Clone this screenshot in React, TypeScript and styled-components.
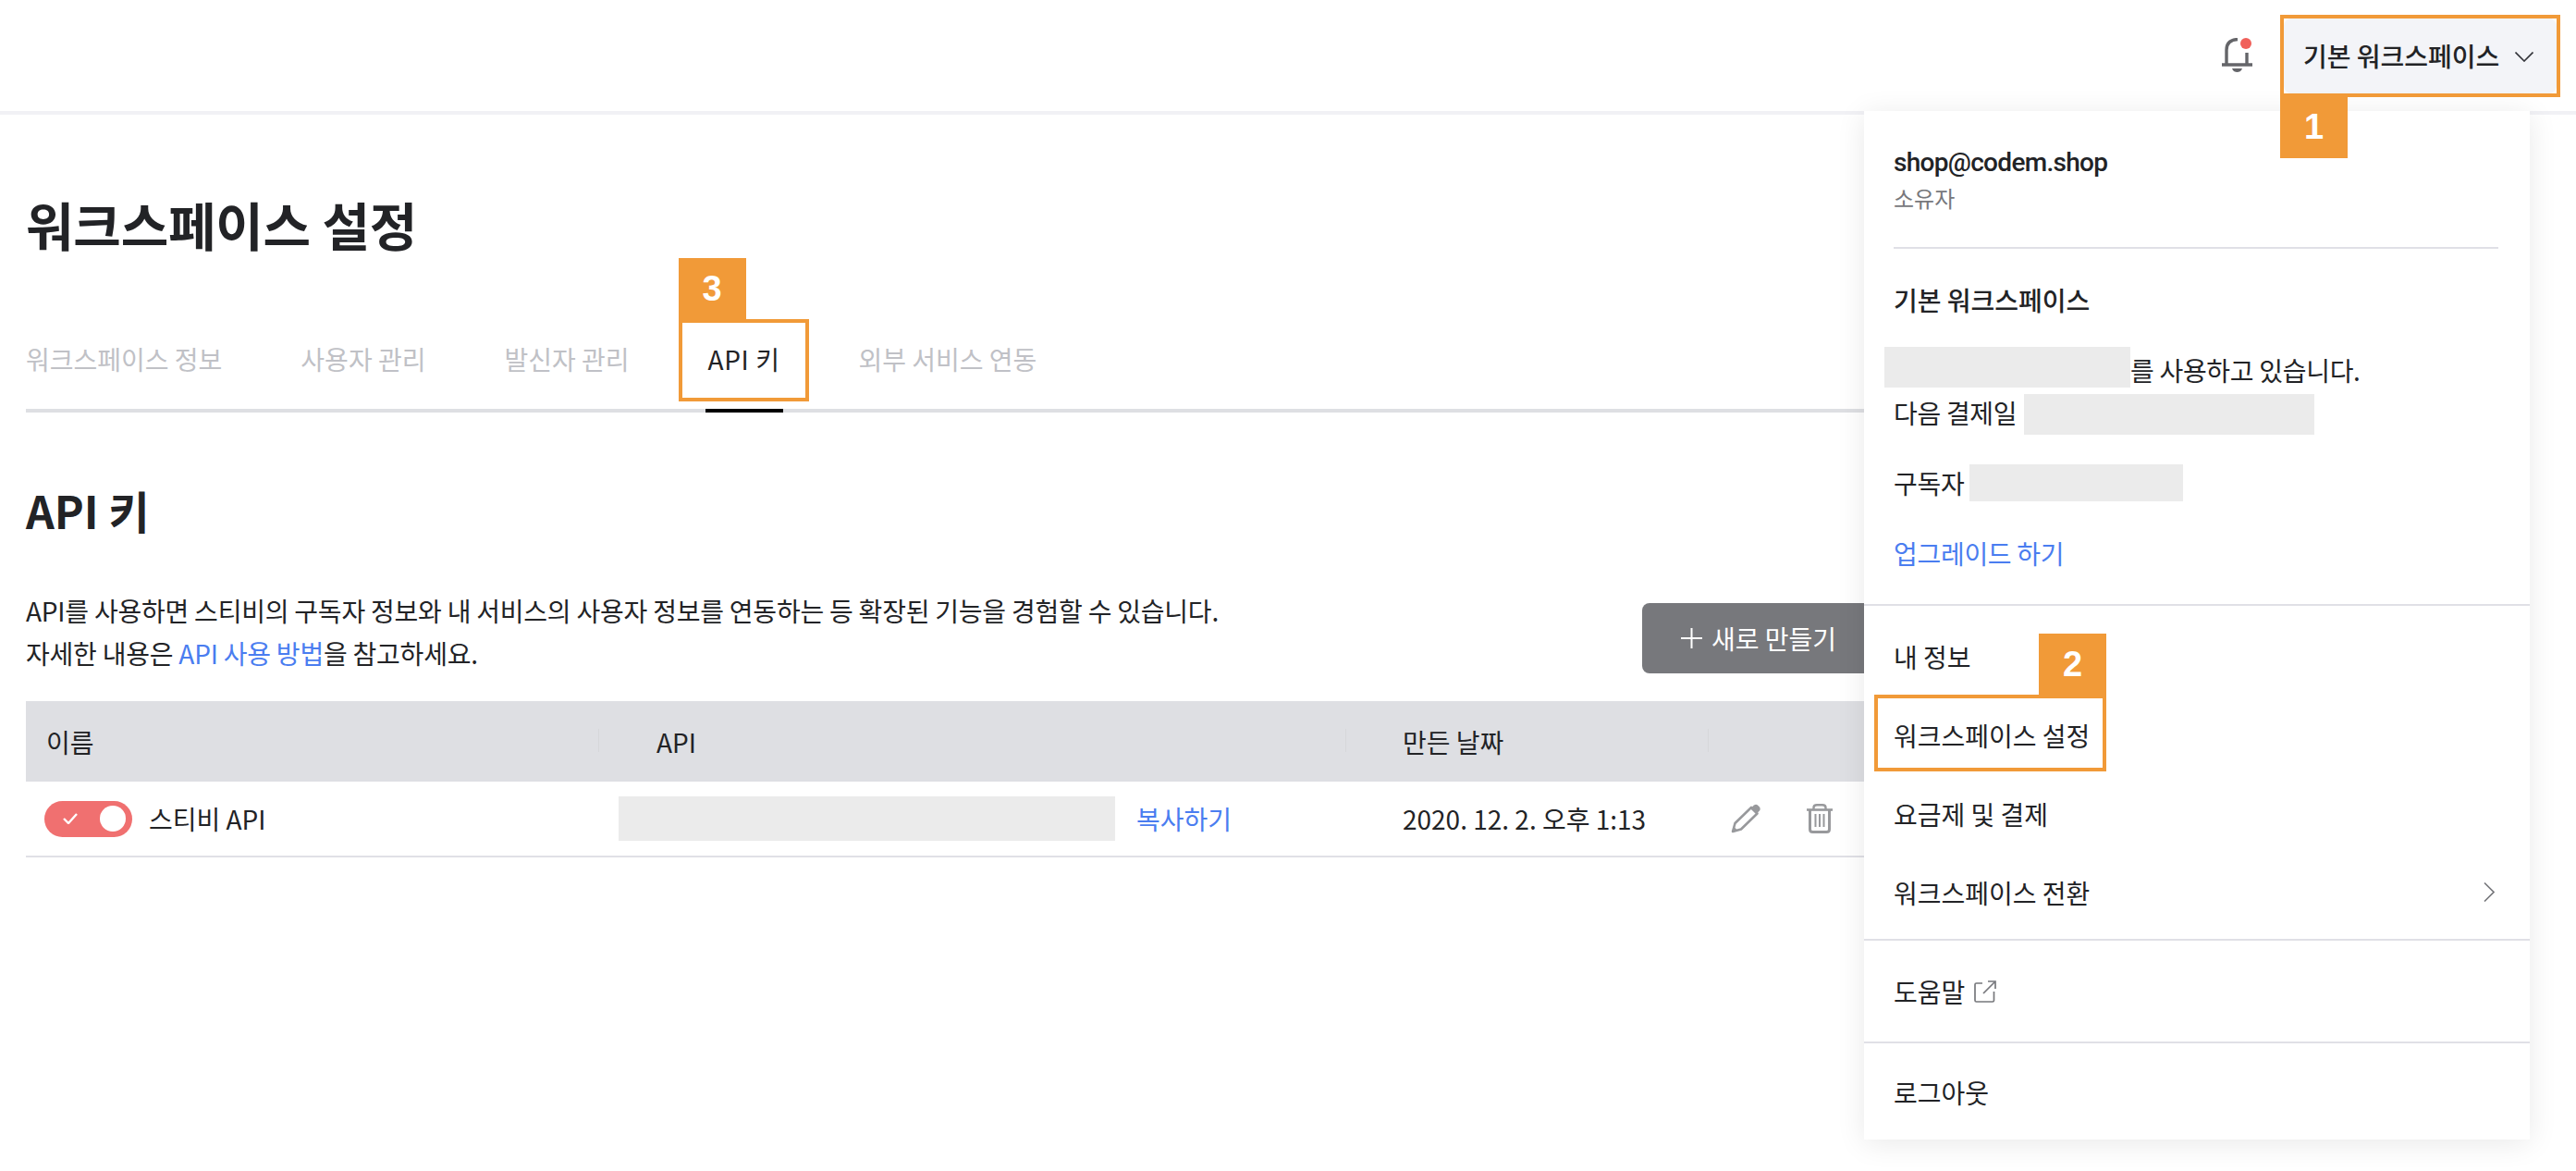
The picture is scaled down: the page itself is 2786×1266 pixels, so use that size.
import React from "react";
import styled, { createGlobalStyle } from "styled-components";

const GlobalStyle = createGlobalStyle`
  html, body {
    margin: 0;
    padding: 0;
    background: #fff;
  }
  body {
    font-family: "Noto Sans CJK KR", "Noto Sans", sans-serif;
    color: #222326;
  }
`;

const ORANGE = "#f19a38";
const BLUE = "#4a7df0";

export default function App() {
  return (
    <Page>
      <GlobalStyle />
      <Header>
        <BellIcon />
        <WorkspaceButton>
          기본 워크스페이스
          <ChevronDown />
          <Callout $top={-4} $left={-4} $width={303} $height={89}>
            <Badge $place="below">1</Badge>
          </Callout>
        </WorkspaceButton>
      </Header>

      <Main>
        <Title>워크스페이스 설정</Title>
        <Tabs>
          <Tab>워크스페이스 정보</Tab>
          <Tab>사용자 관리</Tab>
          <Tab>발신자 관리</Tab>
          <Tab $active>
            API 키
            <Callout $top={-23} $left={-32} $width={141} $height={89}>
              <Badge $place="above">3</Badge>
            </Callout>
          </Tab>
          <Tab>외부 서비스 연동</Tab>
        </Tabs>

        <SectionTitle>API 키</SectionTitle>
        <IntroRow>
          <Intro>
            API를 사용하면 스티비의 구독자 정보와 내 서비스의 사용자 정보를 연동하는 등 확장된 기능을 경험할 수 있습니다.
            <br />
            자세한 내용은 <Link>API 사용 방법</Link>을 참고하세요.
          </Intro>
          <NewButton>
            <PlusIcon />
            새로 만들기
          </NewButton>
        </IntroRow>

        <Table>
          <HeadCell $pad={22}>이름</HeadCell>
          <HeadCell $pad={63} $divider>API</HeadCell>
          <HeadCell $pad={62} $divider>만든 날짜</HeadCell>
          <HeadCell $pad={0} $divider />
          <BodyCell $pad={20}>
            <Toggle>
              <CheckIcon />
              <Knob />
            </Toggle>
            <ApiName>스티비 API</ApiName>
          </BodyCell>
          <BodyCell $pad={22}>
            <Redact $width={537} $height={48} />
            <CopyLink>복사하기</CopyLink>
          </BodyCell>
          <BodyCell $pad={62}>2020. 12. 2. 오후 1:13</BodyCell>
          <BodyCell $pad={25}>
            <PencilIcon />
            <TrashIcon />
          </BodyCell>
        </Table>
      </Main>

      <Panel>
        <Account>
          <Email>shop@codem.shop</Email>
          <Role>소유자</Role>
        </Account>
        <Plan>
          <PlanName>기본 워크스페이스</PlanName>
          <PlanRow $gap={36}>
            <Redact $width={266} $height={44} $offset={-10} $shift={-3} />
            를 사용하고 있습니다.
          </PlanRow>
          <PlanRow $gap={6}>
            다음 결제일
            <Redact $width={314} $height={44} $offset={8} $shift={2} />
          </PlanRow>
          <PlanRow $gap={36}>
            구독자
            <Redact $width={231} $height={40} $offset={6} />
          </PlanRow>
          <PlanRow $gap={36}>
            <Link>업그레이드 하기</Link>
          </PlanRow>
        </Plan>
        <MenuGroup $top={12} $bottom={8} $line>
          <MenuItem>내 정보</MenuItem>
          <MenuItem>
            워크스페이스 설정
            <Callout $top={-1} $left={11} $width={251} $height={83}>
              <Badge $place="above" $alignRight>2</Badge>
            </Callout>
          </MenuItem>
          <MenuItem>요금제 및 결제</MenuItem>
          <MenuItem $between>
            워크스페이스 전환
            <ChevronRight />
          </MenuItem>
        </MenuGroup>
        <MenuGroup $top={12} $bottom={12} $line>
          <MenuItem>
            도움말
            <ExternalIcon />
          </MenuItem>
        </MenuGroup>
        <MenuGroup $top={10} $bottom={9}>
          <MenuItem>로그아웃</MenuItem>
        </MenuGroup>
      </Panel>
    </Page>
  );
}

function BellIcon() {
  return (
    <BellSvg viewBox="0 0 33 38" width={33} height={38}>
      <g fill="none" stroke="#646569" strokeWidth={3.4}>
        <path d="M5 29V13C5 6 9 2 17 1.5" />
        <path d="M27 16V29" />
        <path d="M0 29H33" />
      </g>
      <path d="M11 33H22C21 36 18.5 37 16.5 37C14.5 37 12 36 11 33Z" fill="#646569" />
      <circle cx={26} cy={6} r={6} fill="#f0605a" />
    </BellSvg>
  );
}

function ChevronDown() {
  return (
    <ChevronDownSvg viewBox="0 0 20 11" width={20} height={11}>
      <path d="M0.5 0.5L10 10L19.5 0.5" fill="none" stroke="#33343a" strokeWidth={1.6} />
    </ChevronDownSvg>
  );
}

function ChevronRight() {
  return (
    <ChevronRightSvg viewBox="0 0 12 21" width={12} height={21}>
      <path d="M1 0.5L11 10.5L1 20.5" fill="none" stroke="#77787c" strokeWidth={1.6} />
    </ChevronRightSvg>
  );
}

function ExternalIcon() {
  return (
    <ExternalSvg viewBox="0 0 24 24" width={24} height={24}>
      <g fill="none" stroke="#77787c" strokeWidth={1.7}>
        <path d="M9 3H2.5C1.5 3 1 3.5 1 4.5V21.5C1 22.5 1.5 23 2.5 23H20C21 23 21.5 22.5 21.5 21.5V12" />
        <path d="M10 14L22.5 1.5" />
        <path d="M15 1H23V9" />
      </g>
    </ExternalSvg>
  );
}

function PlusIcon() {
  return (
    <PlusSvg viewBox="0 0 23 22" width={23} height={22}>
      <path d="M11.5 0V22M0 11H23" fill="none" stroke="#fff" strokeWidth={2} />
    </PlusSvg>
  );
}

function CheckIcon() {
  return (
    <svg viewBox="0 0 16 12" width={16} height={12}>
      <path d="M1 6L6 11L15 1" fill="none" stroke="#fff" strokeWidth={2.4} />
    </svg>
  );
}

function PencilIcon() {
  return (
    <PencilSvg viewBox="0 0 32 32" width={32} height={32}>
      <path d="M2 30L4.5 21L22 4L28.5 10.5L11 27.5Z" fill="none" stroke="#98999c" strokeWidth={2.6} strokeLinejoin="round" />
      <path d="M21 5L25 1.5C26.5 .5 28 .5 29.5 2L31 3.5C32 5 32 6.5 30.5 8L27.5 11Z" fill="#98999c" />
      <path d="M1 31L3 24.5L7.5 29Z" fill="#98999c" />
    </PencilSvg>
  );
}

function TrashIcon() {
  return (
    <svg viewBox="0 0 28 32" width={28} height={32}>
      <g fill="none" stroke="#98999c">
        <path d="M0 6.5H28" strokeWidth={2.6} />
        <path d="M7.5 6V4C7.5 2 9 1.2 11 1.2H17C19 1.2 20.5 2 20.5 4V6" strokeWidth={2.4} />
        <path d="M3.5 7V27.5C3.5 29.5 4.5 30.5 6.5 30.5H21.5C23.5 30.5 24.5 29.5 24.5 27.5V7" strokeWidth={3} />
        <path d="M9.5 11V25M14 11V25M18.5 11V25" strokeWidth={2} />
      </g>
    </svg>
  );
}

const Page = styled.div`
  position: relative;
  width: 2786px;
  height: 1266px;
  overflow: hidden;
  background: #fff;
`;

const Header = styled.header`
  display: flex;
  align-items: center;
  justify-content: flex-end;
  gap: 34px;
  height: 120px;
  padding-right: 21px;
  border-bottom: 4px solid #f1f1f5;
`;

const BellSvg = styled.svg`
  display: block;
`;

const WorkspaceButton = styled.div`
  position: relative;
  display: flex;
  align-items: center;
  box-sizing: border-box;
  width: 295px;
  height: 81px;
  padding-left: 21px;
  border-radius: 8px;
  background: #f3f4f8;
  font-size: 28px;
  font-weight: 500;
  white-space: nowrap;
`;

const ChevronDownSvg = styled.svg`
  display: block;
  margin-left: 17px;
  margin-top: 2px;
`;

const ChevronRightSvg = styled.svg`
  display: block;
`;

const ExternalSvg = styled.svg`
  display: block;
  margin-left: 10px;
`;

const PlusSvg = styled.svg`
  display: block;
  margin-right: 10px;
`;

const PencilSvg = styled.svg`
  display: block;
  margin-right: 50px;
`;

const Callout = styled.span<{ $top: number; $left: number; $width: number; $height: number }>`
  position: absolute;
  z-index: 3;
  box-sizing: border-box;
  top: ${(p) => p.$top}px;
  left: ${(p) => p.$left}px;
  width: ${(p) => p.$width}px;
  height: ${(p) => p.$height}px;
  border: 4px solid ${ORANGE};
  letter-spacing: 0;
`;

const Badge = styled.span<{ $place: "above" | "below"; $alignRight?: boolean }>`
  position: absolute;
  ${(p) => (p.$place === "above" ? "bottom: 100%;" : "top: 100%;")}
  ${(p) => (p.$place === "above" ? "margin-bottom: 4px;" : "margin-top: 4px;")}
  ${(p) => (p.$alignRight ? "right: -4px;" : "left: -4px;")}
  width: 73px;
  height: 66px;
  display: flex;
  align-items: center;
  justify-content: center;
  background: ${ORANGE};
  color: #fff;
  font-family: "Liberation Sans", Arial, sans-serif;
  font-size: 38px;
  font-weight: 700;
`;

const Main = styled.main`
  width: 2000px;
  padding: 82px 0 0 28px;
`;

const Title = styled.h1`
  margin: 0;
  font-size: 56px;
  line-height: 72px;
  font-weight: 700;
  letter-spacing: -0.2px;
`;

const Tabs = styled.nav`
  display: flex;
  gap: 85px;
  margin-top: 90px;
  padding-bottom: 34px;
  border-bottom: 4px solid #dedfe3;
`;

const Tab = styled.div<{ $active?: boolean }>`
  position: relative;
  font-size: 28px;
  line-height: 40px;
  color: ${(p) => (p.$active ? "#222326" : "#c0c1c6")};
  ${(p) =>
    p.$active &&
    `
    letter-spacing: 0.6px;
    &::after {
      content: "";
      position: absolute;
      left: -3px;
      right: -3px;
      bottom: -38px;
      height: 4px;
      background: #000;
    }
  `}
`;

const SectionTitle = styled.h2`
  margin: 75px 0 0;
  font-size: 48px;
  line-height: 60px;
  font-weight: 700;
`;

const IntroRow = styled.div`
  display: flex;
  justify-content: space-between;
  align-items: flex-end;
  margin-top: 56px;
`;

const Intro = styled.p`
  margin: 0;
  font-size: 28px;
  line-height: 46px;
  letter-spacing: -0.22px;
`;

const Link = styled.span`
  color: ${BLUE};
`;

const NewButton = styled.div`
  display: flex;
  align-items: center;
  justify-content: center;
  box-sizing: border-box;
  width: 252px;
  height: 76px;
  margin-bottom: 1px;
  border-radius: 8px;
  background: #77787c;
  color: #fff;
  font-size: 28px;
`;

const Table = styled.div`
  display: grid;
  grid-template-columns: 619px 808px 392px 181px;
  grid-template-rows: 87px 82px;
  margin-top: 29px;
`;

const HeadCell = styled.div<{ $pad: number; $divider?: boolean }>`
  position: relative;
  display: flex;
  align-items: center;
  padding-left: ${(p) => p.$pad}px;
  background: #dedfe3;
  font-size: 28px;
  ${(p) =>
    p.$divider &&
    `
    &::before {
      content: "";
      position: absolute;
      left: 0;
      top: 30px;
      width: 1px;
      height: 25px;
      background: #d6d7da;
    }
  `}
`;

const BodyCell = styled.div<{ $pad: number }>`
  display: flex;
  align-items: center;
  padding-left: ${(p) => p.$pad}px;
  border-bottom: 2px solid #e0e0e6;
  font-size: 28px;
  white-space: nowrap;
`;

const Toggle = styled.div`
  display: flex;
  align-items: center;
  justify-content: space-between;
  box-sizing: border-box;
  width: 95px;
  height: 39px;
  padding: 0 7px 0 20px;
  border-radius: 20px;
  background: #f07070;
`;

const Knob = styled.div`
  width: 28px;
  height: 28px;
  border-radius: 50%;
  background: #fff;
`;

const ApiName = styled.span`
  margin-left: 18px;
`;

const Redact = styled.div<{ $width: number; $height: number; $offset?: number; $shift?: number }>`
  flex: none;
  width: ${(p) => p.$width}px;
  height: ${(p) => p.$height}px;
  margin-left: ${(p) => p.$offset ?? 0}px;
  transform: translateY(${(p) => p.$shift ?? 0}px);
  background: #ebebeb;
`;

const CopyLink = styled.span`
  margin-left: 23px;
  color: ${BLUE};
`;

const Panel = styled.aside`
  position: absolute;
  z-index: 2;
  top: 120px;
  left: 2016px;
  width: 720px;
  background: #fff;
  box-shadow: 0 4px 30px rgba(0, 0, 0, 0.09);
  font-size: 28px;
`;

const Account = styled.div`
  margin: 0 34px 0 32px;
  padding: 38px 0 35px;
  border-bottom: 2px solid #e0e0e6;
`;

const Email = styled.div`
  font-family: Roboto, "Noto Sans CJK KR", sans-serif;
  font-weight: 500;
  line-height: 36px;
  letter-spacing: -0.7px;
`;

const Role = styled.div`
  margin-top: 4px;
  margin-bottom: 2px;
  font-size: 24px;
  line-height: 32px;
  color: #77787c;
`;

const Plan = styled.div`
  padding: 35px 0 35px 32px;
  border-bottom: 2px solid #e0e0e6;
`;

const PlanName = styled.div`
  font-weight: 500;
  line-height: 40px;
`;

const PlanRow = styled.div<{ $gap: number }>`
  display: flex;
  align-items: center;
  height: 40px;
  margin-top: ${(p) => p.$gap}px;
  white-space: nowrap;
  letter-spacing: -0.3px;
`;

const MenuGroup = styled.div<{ $top: number; $bottom: number; $line?: boolean }>`
  padding: ${(p) => p.$top}px 0 ${(p) => p.$bottom}px;
  ${(p) => p.$line && "border-bottom: 2px solid #e0e0e6;"}
`;

const MenuItem = styled.div<{ $between?: boolean }>`
  position: relative;
  display: flex;
  align-items: center;
  justify-content: ${(p) => (p.$between ? "space-between" : "flex-start")};
  height: 85px;
  padding: 0 38px 0 32px;
`;
